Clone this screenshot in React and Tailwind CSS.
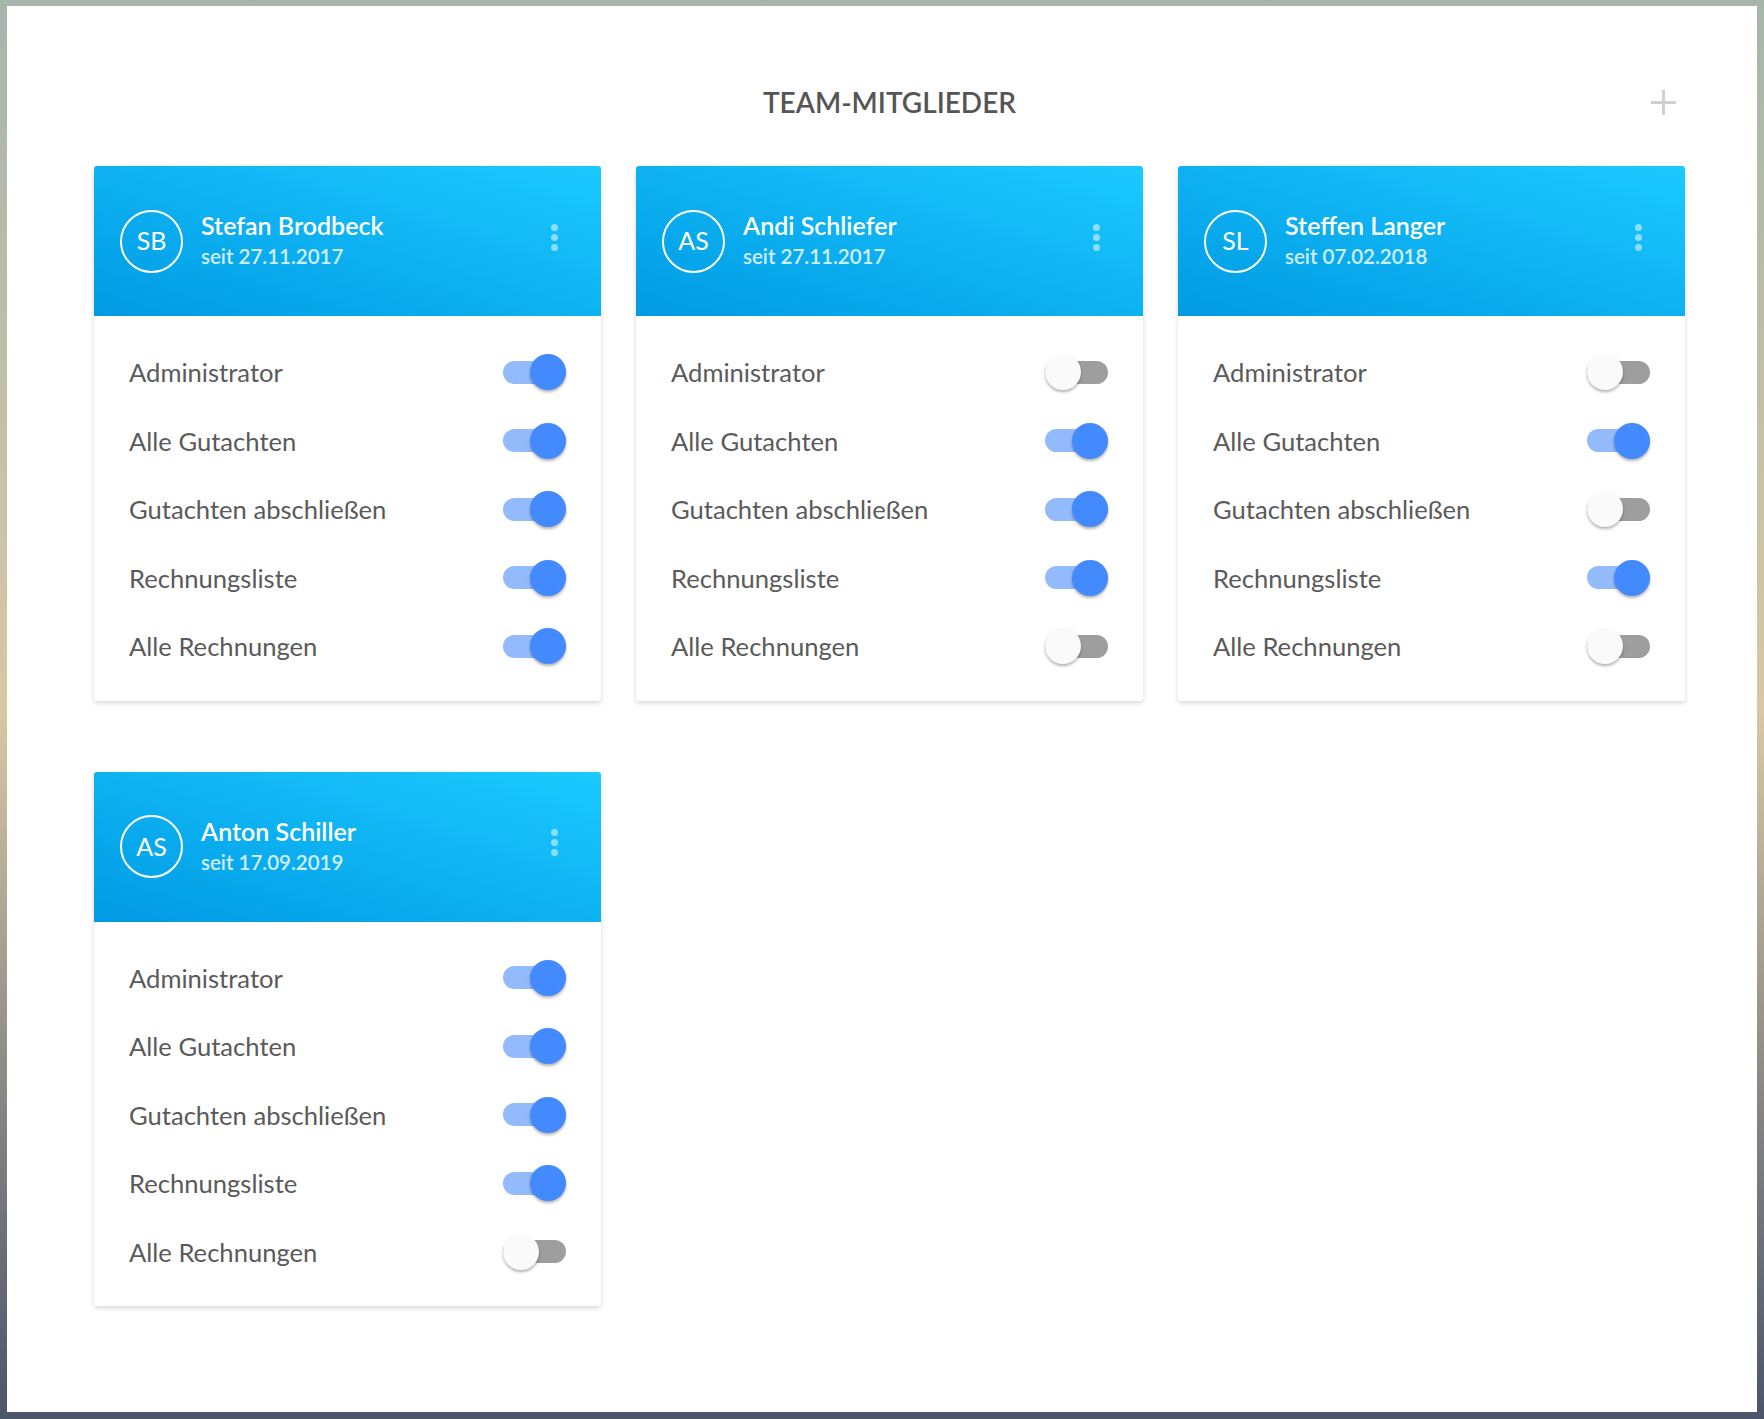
import { useState } from 'react'

const PERMS = ['Administrator', 'Alle Gutachten', 'Gutachten abschließen', 'Rechnungsliste', 'Alle Rechnungen']

const MEMBERS = [
  { initials: 'SB', name: 'Stefan Brodbeck', since: '27.11.2017', perms: [true, true, true, true, true] },
  { initials: 'AS', name: 'Andi Schliefer', since: '27.11.2017', perms: [false, true, true, true, false] },
  { initials: 'SL', name: 'Steffen Langer', since: '07.02.2018', perms: [false, true, false, true, false] },
  { initials: 'AS', name: 'Anton Schiller', since: '17.09.2019', perms: [true, true, true, true, false] },
]

function Toggle({ on, onChange }) {
  return (
    <button
      type="button"
      onClick={onChange}
      className="relative flex h-[36px] w-[63px] items-center"
    >
      <span className={`h-[23px] w-full rounded-full ${on ? 'bg-[#93bbfb]' : 'bg-[#9e9e9e]'}`} />
      <span
        className={`absolute top-0 h-[36px] w-[36px] rounded-full shadow-[0_2px_3px_rgba(0,0,0,0.3)] ${
          on ? 'right-0 bg-[#448aff]' : 'left-0 bg-[#fafafa]'
        }`}
      />
    </button>
  )
}

function MemberCard({ member }) {
  const [perms, setPerms] = useState(member.perms)

  const flip = (i) => setPerms((p) => p.map((v, j) => (j === i ? !v : v)))

  return (
    <div className="overflow-hidden rounded-[3px] bg-white shadow-[0_2px_5px_rgba(0,0,0,0.16)]">
      <div className="flex h-[150px] items-center bg-linear-to-tr from-[#029ae4] to-[#1bcaff] pl-[26px] pr-[43px] text-white">
        <div className="flex h-[63px] w-[63px] shrink-0 items-center justify-center rounded-full border-2 border-white text-[25px]">
          {member.initials}
        </div>
        <div className="ml-[18px] flex flex-1 flex-col">
          <span className="text-[25px] leading-[30px] font-semibold">{member.name}</span>
          <span className="text-[20.5px] leading-[32px] font-semibold text-white/80">seit {member.since}</span>
        </div>
        <div className="-mt-[8px] flex flex-col gap-[3px]">
          <span className="h-[7px] w-[7px] rounded-full bg-white/50" />
          <span className="h-[7px] w-[7px] rounded-full bg-white/50" />
          <span className="h-[7px] w-[7px] rounded-full bg-white/50" />
        </div>
      </div>
      <div className="px-[35px] pb-[20px] pt-[22px]">
        {PERMS.map((label, i) => (
          <div key={label} className="flex h-[68.5px] items-center justify-between">
            <span className="text-[25.6px] text-[#5a5a5a]">{label}</span>
            <Toggle on={perms[i]} onChange={() => flip(i)} />
          </div>
        ))}
      </div>
    </div>
  )
}

export default function App() {
  return (
    <div className="h-[1419px] w-full bg-linear-to-b from-[#a6b5ab] via-[#d8c8a4] to-[#4c5469] pb-[7px] pl-[7px] pr-[7px] pt-[6px] font-['Lato',_sans-serif]">
      <div className="h-full bg-white pl-[87px] pt-[76px]">
        <div className="w-[1591px]">
          <div className="relative mb-[44px] flex h-[40px] items-center justify-center">
            <h1 className="text-[28px] font-semibold text-[#555555]">TEAM-MITGLIEDER</h1>
            <button type="button" className="absolute right-[9px] top-[8px] text-[#d0d0d0]">
              <svg width="25" height="25" viewBox="0 0 25 25">
                <path d="M12.5 0v25M0 12.5h25" stroke="currentColor" strokeWidth="3" />
              </svg>
            </button>
          </div>
          <div className="grid grid-cols-3 gap-x-[35px] gap-y-[71px]">
            {MEMBERS.map((m, i) => (
              <MemberCard key={i} member={m} />
            ))}
          </div>
        </div>
      </div>
    </div>
  )
}
